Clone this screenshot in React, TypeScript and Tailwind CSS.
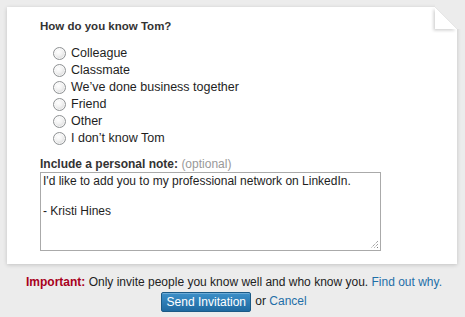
import React from 'react';

const options = [
  'Colleague',
  'Classmate',
  'We\u2019ve done business together',
  'Friend',
  'Other',
  'I don\u2019t know Tom',
];

const Radio = () => (
  <span className="block w-[13px] h-[13px] rounded-full border border-[#8f9294] bg-[radial-gradient(circle_at_40%_35%,#ffffff_0%,#f2f2f2_40%,#c9cacb_100%)] shadow-[inset_0_0_0_1px_rgba(255,255,255,0.7)]" />
);

const Fold = () => (
  <svg width="34" height="33" viewBox="0 0 34 33" className="absolute right-[-6px] top-[-5px]">
    <defs>
      <filter id="foldShadow" x="-50%" y="-50%" width="200%" height="200%">
        <feGaussianBlur stdDeviation="1.4" />
      </filter>
    </defs>
    <polygon points="6,0 34,0 34,27 28,27 6,5" fill="#ececec" />
    <polygon points="6,5 6,27 28,27" fill="#000" opacity="0.18" filter="url(#foldShadow)" transform="translate(-1.5,1.5)" />
    <polygon points="6,5 6,27 28,27" fill="#ffffff" />
    <line x1="6" y1="5" x2="28" y2="27" stroke="#e6e6e6" strokeWidth="1" />
  </svg>
);

export default function App() {
  return (
    <div className="w-[465px] h-[317px] bg-[#ececec] pt-[7px] font-['Liberation_Sans',Arial,sans-serif] text-[12px] overflow-hidden">
      <div className="relative ml-[7px] w-[450px] h-[257px] bg-white shadow-[0_1px_4px_rgba(0,0,0,0.18)] pl-[33px] pt-[12px]">
        <Fold />
        <h2 className="text-[11.5px] leading-[15px] font-bold text-[#333333]">How do you know Tom?</h2>
        <ul className="mt-[11px] ml-[13px]">
          {options.map((o) => (
            <li key={o} className="flex items-center h-[17px] gap-[5px]">
              <Radio />
              <span className="text-[12.5px] leading-[17px] text-[#1e1e1e]">{o}</span>
            </li>
          ))}
        </ul>
        <div className="mt-[10px] leading-[15px]">
          <span className="font-bold text-[#333333]">Include a personal note:</span>{' '}
          <span className="text-[#999999]">(optional)</span>
        </div>
        <div className="relative w-[341px] h-[79px]">
          <textarea
            readOnly
            className="block w-full h-full resize-none border border-[#aaaaaa] bg-white px-[2px] py-[1px] text-[12px] leading-[15px] text-[#1e1e1e] outline-none"
            defaultValue={"I'd like to add you to my professional network on LinkedIn.\n\n- Kristi Hines"}
          />
          <svg width="9" height="9" viewBox="0 0 9 9" className="absolute right-[2px] bottom-[2px]">
            <line x1="8" y1="1" x2="1" y2="8" stroke="#7a7a7a" strokeWidth="1" strokeDasharray="1 1" />
            <line x1="8" y1="4" x2="4" y2="8" stroke="#7a7a7a" strokeWidth="1" strokeDasharray="1 1" />
            <line x1="8" y1="7" x2="7" y2="8" stroke="#7a7a7a" strokeWidth="1" />
          </svg>
        </div>
      </div>
      <div className="pl-[3px] mt-[11px] text-center leading-[15px] text-[#222222]">
        <span className="font-bold text-[#a8001c]">Important:</span> Only invite people you know well and who know you.{' '}
        <a className="text-[#1f6fa8]">Find out why.</a>
      </div>
      <div className="pl-[3px] mt-[2px] flex justify-center items-center">
        <button className="w-[90px] h-[20px] rounded-[2px] border border-[#1b5a86] bg-[linear-gradient(#3d90c9,#1f6aa1)] text-white text-[12px] leading-[18px] text-center shadow-[inset_0_1px_0_rgba(255,255,255,0.25)]">
          Send Invitation
        </button>
        <span className="ml-[4px] leading-[15px] text-[#222222] -mt-[2px]">
          or <a className="text-[#1f6fa8]">Cancel</a>
        </span>
      </div>
    </div>
  );
}
